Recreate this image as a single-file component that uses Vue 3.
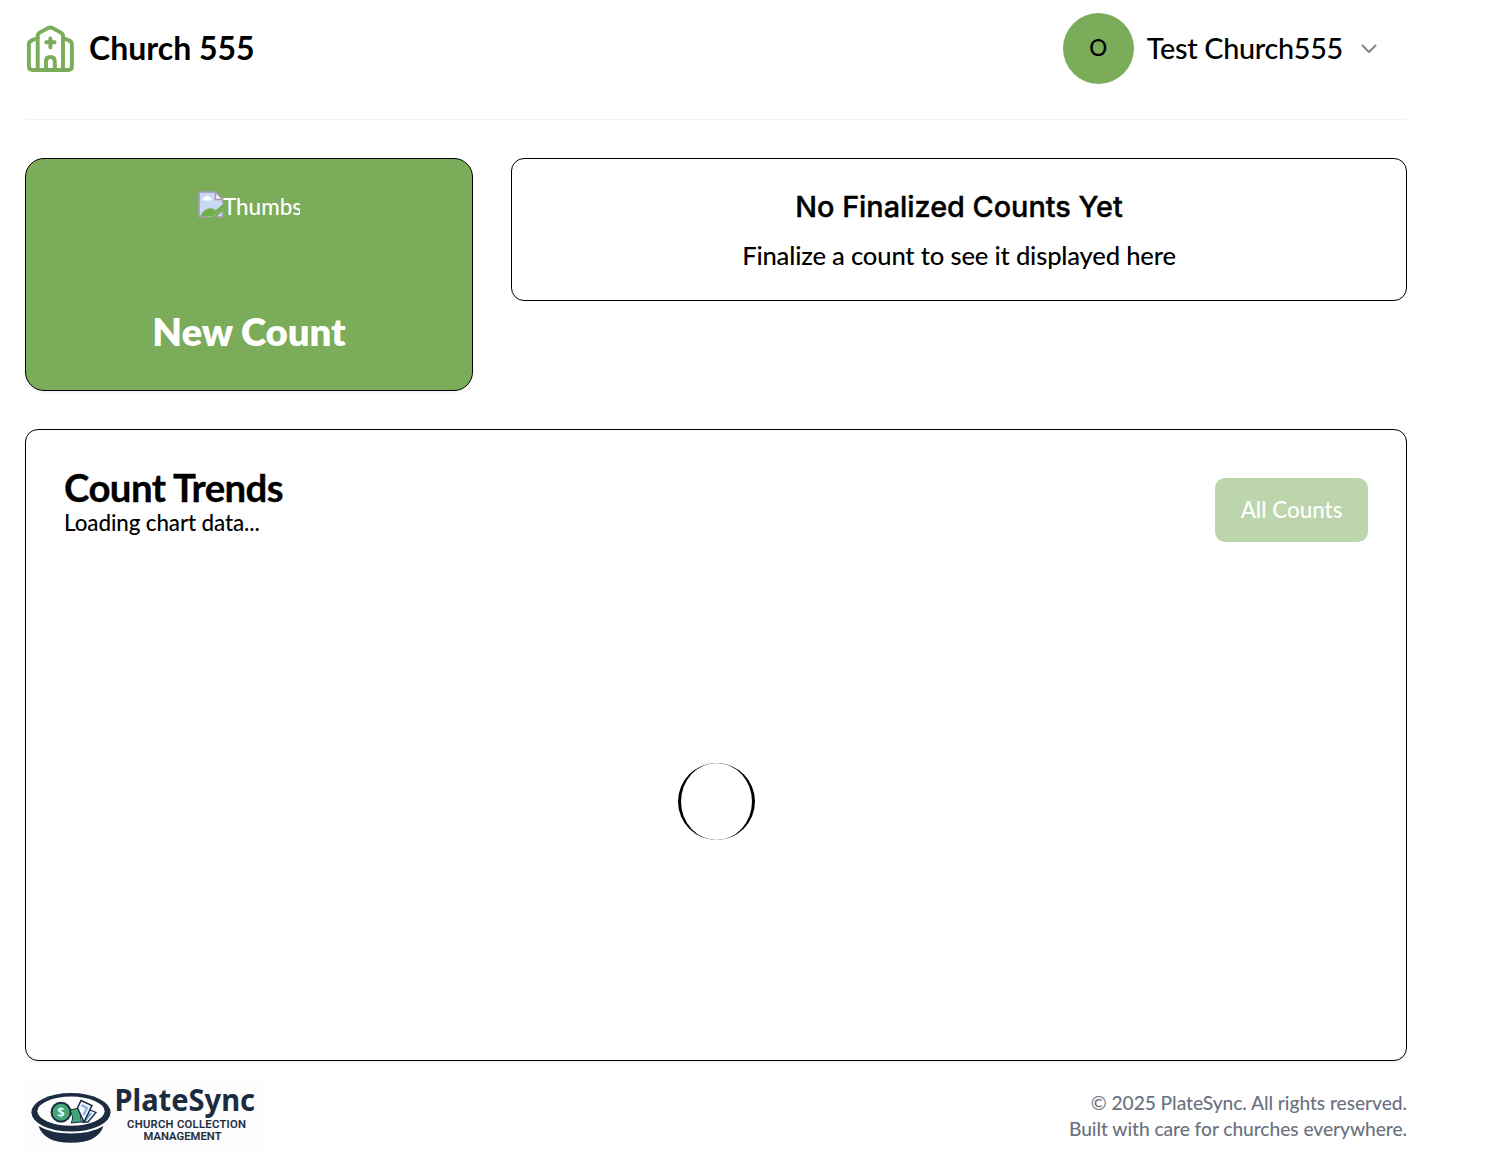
<script setup>
const church = 'Church 555'
const user = { initial: 'O', name: 'Test Church555' }
</script>

<template>
  <div class="page">
    <header class="header">
      <div class="brand">
        <svg class="church" viewBox="0 0 51 51" fill="none" stroke="#7aac59" stroke-width="3.9" stroke-linecap="round" stroke-linejoin="round">
          <path d="M12.7 47V13.1Q12.7 10.7 14.8 9.6L22.9 5.1Q25.3 3.9 27.7 5.1L35.9 9.6Q38 10.7 38 13.1V47" />
          <path d="M12.7 15L6.4 17.6Q3.9 18.7 3.9 21.2V43.3Q3.9 47 7.6 47H43.2Q46.9 47 46.9 43.3V21.2Q46.9 18.7 44.4 17.6L38 15" />
          <path d="M25.4 15.4V24.4M21.2 19.3H29.6" />
          <path d="M21 46.8V38.4Q21 34 25.4 34T29.8 38.4V46.8" />
        </svg>
        <h1 class="name">{{ church }}</h1>
      </div>
      <div class="user">
        <span class="avatar">{{ user.initial }}</span>
        <span class="user-name">{{ user.name }}</span>
        <svg class="chevron" viewBox="0 0 16 10" fill="none" stroke="#858585" stroke-width="2" stroke-linecap="round" stroke-linejoin="round">
          <path d="M1.5 1.5L8 8L14.5 1.5" />
        </svg>
      </div>
    </header>

    <main>
      <section class="top">
        <button class="new-count">
          <span class="thumb">
            <svg class="broken" viewBox="0 0 26 27">
              <path d="M1 1H17.5L25 8.5V26H1Z" fill="#c7d7f4" />
              <path d="M5 9.4a2 2 0 0 1 1.5-3.2a3 3 0 0 1 5.4-.2a2 2 0 0 1 1.2 3.4Z" fill="#fff" />
              <path d="M2 25.5C5 20 8 17.5 12 17.2C15 17 16.5 18.5 17.5 19.5L25 13V17L14 25.5Z" fill="#72ad4d" />
              <path d="M17.5 1.5V8.5H24.5" fill="#f4f3fa" stroke="#a39cac" stroke-width="1.5" />
              <path d="M24.8 12V8.5L17.5 1H1V26H10.5M16.5 26H24.8V20.5" fill="none" stroke="#a39cac" stroke-width="1.6" />
              <path d="M12.5 27L26 16V19L17 27Z" fill="#7aac59" />
            </svg><span class="alt">Thumbs</span>
          </span>
          <span class="new-label">New Count</span>
        </button>
        <div class="empty">
          <h2>No Finalized Counts Yet</h2>
          <p>Finalize a count to see it displayed here</p>
        </div>
      </section>

      <section class="trends">
        <div class="trends-head">
          <div>
            <h2>Count Trends</h2>
            <p>Loading chart data...</p>
          </div>
          <button class="all" disabled>All Counts</button>
        </div>
        <div class="chart"><div class="spinner"></div></div>
      </section>
    </main>

    <footer class="footer">
      <svg class="logo" viewBox="0 0 236 70">
        <rect width="236" height="70" fill="#fdfdfd" />
        <path d="M13.5 46Q26 53.5 46 53.5T78.5 46Q73 62.8 46 62.8T13.5 46Z" fill="#1c2b40" />
        <ellipse cx="46" cy="32.3" rx="39.6" ry="19.3" fill="#1c2b40" />
        <ellipse cx="46" cy="31.2" rx="33.6" ry="14.6" fill="#fefefe" />
        <path d="M44 30L55 28L56 42L46 43Q50 37 44 30Z" fill="#43a574" stroke="#1c2b40" stroke-width="1" />
        <path d="M64 29.5L71 32.5L63 42H57Z" fill="#eef4fc" stroke="#1c2b40" stroke-width="1.3" />
        <path d="M66 33L60 41" stroke="#6aa4df" stroke-width="2" />
        <path d="M56 20.5L67 25.5L59 42L52.5 28Z" fill="#f5f8fd" stroke="#1c2b40" stroke-width="1.5" />
        <path d="M56.5 25L62 28L58.5 35" fill="none" stroke="#8ab7ea" stroke-width="2.4" />
        <circle cx="36" cy="32.2" r="9.5" fill="#43a574" stroke="#1c2b40" stroke-width="2" />
        <text x="36" y="36.9" class="dollar" text-anchor="middle">$</text>
        <text x="89.5" y="31" class="logo-name" textLength="140.5" lengthAdjust="spacingAndGlyphs">PlateSync</text>
        <text x="102" y="48" class="logo-sub" textLength="119" lengthAdjust="spacing">CHURCH COLLECTION</text>
        <text x="118.5" y="60" class="logo-sub" textLength="78" lengthAdjust="spacing">MANAGEMENT</text>
      </svg>
      <div class="legal">
        <p>© 2025 PlateSync. All rights reserved.</p>
        <p>Built with care for churches everywhere.</p>
      </div>
    </footer>
  </div>
</template>

<style>
body {
  margin: 0;
  background: #fff;
}
</style>

<style scoped>
* {
  box-sizing: border-box;
}
h1, h2, p {
  margin: 0;
}
button {
  font-family: inherit;
}
.page {
  width: 1407px;
  height: 1170px;
  padding-left: 25px;
  overflow: hidden;
  font-family: Lato, "Liberation Sans", sans-serif;
  font-weight: 500;
  color: #000;
}
.header {
  display: flex;
  justify-content: space-between;
  height: 120px;
  padding: 13px 30px 0 0;
  border-bottom: 1px solid #f3f3f3;
}
.brand, .user {
  display: flex;
  align-items: center;
  height: 71px;
}
.church {
  width: 51px;
  height: 51px;
}
.name {
  margin-left: 13px;
  padding-bottom: 2px;
  font-size: 32px;
  line-height: 45px;
  font-weight: 700;
}
.avatar {
  display: flex;
  align-items: center;
  justify-content: center;
  width: 71px;
  height: 71px;
  padding-bottom: 2px;
  border-radius: 50%;
  background: #7aac59;
  font-size: 22.4px;
}
.user-name {
  margin-left: 13px;
  padding-bottom: 2px;
  font-size: 28.8px;
  letter-spacing: -0.3px;
}
.chevron {
  width: 16px;
  height: 10px;
  margin-left: 18px;
}
.top {
  display: flex;
  align-items: flex-start;
  gap: 38px;
  margin-top: 38px;
}
.new-count {
  display: flex;
  flex-direction: column;
  align-items: center;
  width: 448px;
  height: 233px;
  padding: 32px 0 0;
  border: 1px solid #000;
  border-radius: 19px;
  background: #7aac59;
  color: #fff;
  box-shadow: 0 2px 3px rgba(0, 0, 0, 0.06);
}
.thumb {
  display: flex;
  width: 102px;
  height: 102px;
  overflow: hidden;
}
.broken {
  flex: none;
  width: 26px;
  height: 27px;
}
.alt {
  margin-left: -1px;
  font-size: 22.4px;
  line-height: 32px;
  font-weight: 500;
}
.new-label {
  margin-top: 13px;
  font-size: 38.4px;
  line-height: 51px;
  font-weight: 800;
  letter-spacing: -0.1px;
}
.empty {
  width: 896px;
  height: 143px;
  padding-top: 25px;
  border: 1px solid #000;
  border-radius: 13px;
  text-align: center;
}
.empty h2 {
  font-family: Inter, "Liberation Sans", sans-serif;
  font-size: 28.8px;
  line-height: 45px;
  font-weight: 500;
  -webkit-text-stroke: 0.4px #000;
}
.empty p {
  margin-top: 7px;
  font-size: 25.6px;
  line-height: 38px;
  letter-spacing: -0.17px;
}
.trends {
  height: 632px;
  margin-top: 38px;
  padding: 38px;
  border: 1px solid #000;
  border-radius: 13px;
  box-shadow: 0 2px 3px rgba(0, 0, 0, 0.05);
}
.trends-head {
  display: flex;
  justify-content: space-between;
}
.trends-head h2 {
  font-size: 38.4px;
  line-height: 39px;
  letter-spacing: -0.6px;
  font-weight: 700;
  -webkit-text-stroke: 0.3px #000;
}
.trends-head p {
  font-size: 22.4px;
  line-height: 32px;
  letter-spacing: -0.1px;
}
.all {
  width: 153px;
  height: 64px;
  margin-top: 10px;
  padding: 0 0 2px;
  border: 0;
  border-radius: 10px;
  background: #bcd5ac;
  color: #fff;
  font-size: 22.4px;
  font-weight: 500;
}
.chart {
  display: flex;
  align-items: center;
  justify-content: center;
  height: 442px;
  margin-top: 38px;
}
.spinner {
  width: 77px;
  height: 77px;
  border: solid #000;
  border-width: 0 3px;
  border-radius: 50%;
}
.footer {
  display: flex;
  justify-content: space-between;
  margin-top: 19px;
}
.logo {
  width: 236px;
  height: 70px;
  overflow: visible;
}
.logo-name {
  font: 700 31px "Noto Sans", sans-serif;
  fill: #1c2b40;
}
.logo-sub {
  font: 500 11.2px Roboto, sans-serif;
  fill: #1c2b40;
  stroke: #1c2b40;
  stroke-width: 0.2px;
}
.dollar {
  font: 600 13px "Noto Sans", sans-serif;
  fill: #fff;
}
.legal {
  padding-top: 10px;
  text-align: right;
  font-size: 19.2px;
  line-height: 26px;
  letter-spacing: -0.05px;
  color: #6b7280;
}
</style>
